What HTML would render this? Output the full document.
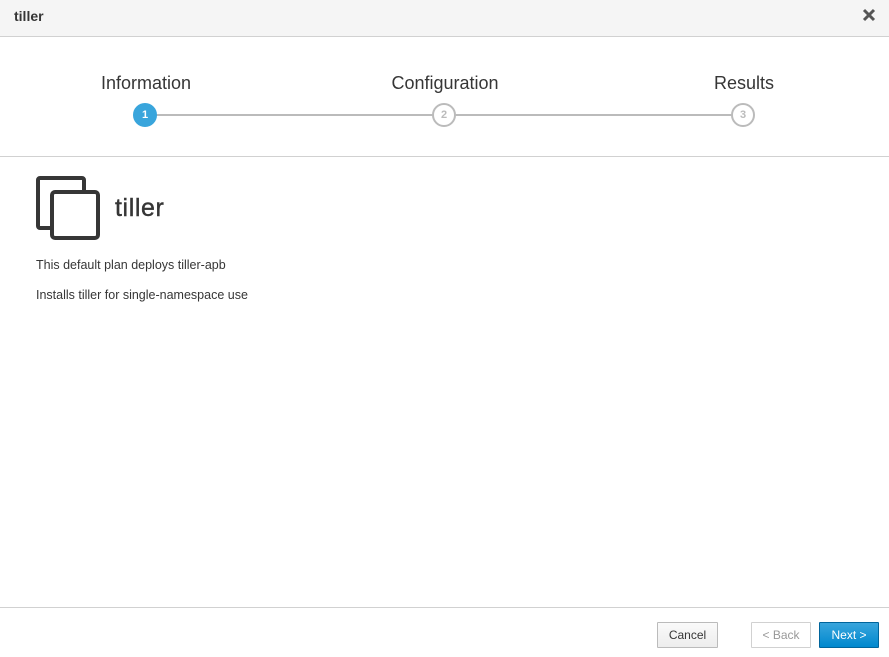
<!DOCTYPE html>
<html><head><meta charset="utf-8"><style>
*{box-sizing:border-box;margin:0;padding:0}
body{width:889px;height:657px;background:#fff;font-family:"Liberation Sans",sans-serif;color:#363636;position:relative;overflow:hidden}
.hdr{position:absolute;left:0;top:0;width:889px;height:37px;background:#f5f5f5;border-bottom:1px solid #d1d1d1}
.hdr .t{position:absolute;left:14px;top:8px;font-size:14px;font-weight:bold;color:#363636}
.lbl{position:absolute;top:73px;font-size:18px;color:#363636;transform:translateX(-50%);white-space:nowrap}
.line{position:absolute;top:114px;height:2px;background:#bbb}
.c{position:absolute;top:103px;width:24px;height:24px;border-radius:50%;border:2px solid #bbb;background:#fff;color:#bbb;font-size:11px;font-weight:bold;text-align:center;line-height:20px}
.c.a{background:#39a5dc;border-color:#39a5dc;color:#fff}
.sep{position:absolute;left:0;width:889px;height:1px;background:#d1d1d1}
.h{position:absolute;left:115px;top:194px;font-size:25px;color:#363636;letter-spacing:0.6px;-webkit-text-stroke:0.4px #363636}
.p{position:absolute;left:36px;font-size:12.5px;color:#363636}
.btn{position:absolute;top:622px;height:26px;font-size:12px;text-align:center;line-height:24px;border:1px solid #bbb;border-radius:1px}
</style></head><body>
<div class="hdr"><div class="t">tiller</div>
<svg style="position:absolute;left:862px;top:8px" width="14" height="14"><path d="M2 2 L12 12 M12 2 L2 12" stroke="#555" stroke-width="3"/></svg></div>
<div class="lbl" style="left:146px">Information</div>
<div class="lbl" style="left:445px">Configuration</div>
<div class="lbl" style="left:744px">Results</div>
<div class="line" style="left:145px;width:598px"></div>
<div class="c a" style="left:133px">1</div>
<div class="c" style="left:432px">2</div>
<div class="c" style="left:731px">3</div>
<div class="sep" style="top:156px"></div>
<svg style="position:absolute;left:34px;top:174px" width="70" height="70">
<path d="M20 54 H6 a2 2 0 0 1 -2 -2 V6 a2 2 0 0 1 2 -2 H48 a2 2 0 0 1 2 2 V16" fill="none" stroke="#363636" stroke-width="4"/>
<rect x="18" y="18" width="46" height="46" rx="3" fill="none" stroke="#363636" stroke-width="4"/>
</svg>
<div class="h">tiller</div>
<div class="p" style="top:258px">This default plan deploys tiller-apb</div>
<div class="p" style="top:288px">Installs tiller for single-namespace use</div>
<div class="sep" style="top:607px"></div>
<div class="btn" style="left:657px;width:61px;background:linear-gradient(#fafafa,#ededed);color:#363636">Cancel</div>
<div class="btn" style="left:751px;width:60px;background:#fff;border-color:#d1d1d1;color:#999">&lt; Back</div>
<div class="btn" style="left:819px;width:60px;background:linear-gradient(#39a5dc,#0088ce);border-color:#00659c;color:#fff">Next &gt;</div>
</body></html>
